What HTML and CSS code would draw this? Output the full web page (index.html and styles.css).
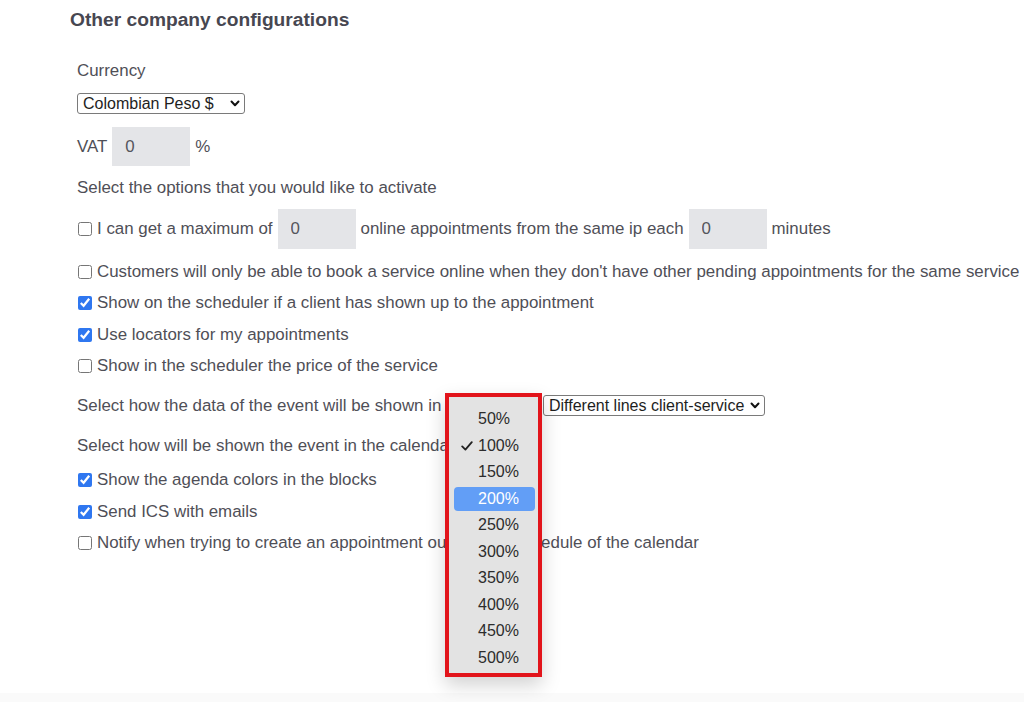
FILE: index.html
```html
<!DOCTYPE html>
<html lang="en">
<head>
    <meta charset="UTF-8">
    <meta name="viewport" content="width=device-width, initial-scale=1.0">
    <title>Other company configurations</title>
    <link rel="stylesheet" href="styles.css">
</head>
<body>
    <div class="page">
        <h2 class="title">Other company configurations</h2>

        <div class="form">
            <div class="row text-row">Currency</div>
            <div class="row sel-row">
                <span class="select-wrap">
                    <select class="sel sel-currency"><option>Colombian Peso $</option></select>
                    <svg class="chev" width="10" height="7" viewBox="0 0 10 7"><path d="M1.5 1.5 L5 5.2 L8.5 1.5" fill="none" stroke="#111" stroke-width="2" stroke-linecap="round" stroke-linejoin="round"/></svg>
                </span>
            </div>
            <div class="row vat-row">
                <span>VAT</span>
                <input class="num" type="text" value="0">
                <span>%</span>
            </div>
            <div class="row text-row options">Select the options that you would like to activate</div>

            <!-- opciones -->
            <label class="row check input-row">
                <input type="checkbox">
                <span>I can get a maximum of</span>
                <input class="num" type="text" value="0">
                <span>online appointments from the same ip each</span>
                <input class="num" type="text" value="0">
                <span>minutes</span>
            </label>
            <label class="row check first"><input type="checkbox"><span>Customers will only be able to book a service online when they don't have other pending appointments for the same service</span></label>
            <label class="row check"><input type="checkbox" checked><span>Show on the scheduler if a client has shown up to the appointment</span></label>
            <label class="row check"><input type="checkbox" checked><span>Use locators for my appointments</span></label>
            <label class="row check"><input type="checkbox"><span>Show in the scheduler the price of the service</span></label>

            <div class="row sel-line">
                <span class="sel-label">Select how the data of the event will be shown in the calendar</span>
                <span class="select-wrap">
                    <select class="sel sel-lines"><option>Different lines client-service</option></select>
                    <svg class="chev" width="10" height="7" viewBox="0 0 10 7"><path d="M1.5 1.5 L5 5.2 L8.5 1.5" fill="none" stroke="#111" stroke-width="2" stroke-linecap="round" stroke-linejoin="round"/></svg>
                </span>
            </div>
            <div class="row sel-line second">
                <span class="sel-label">Select how will be shown the event in the calendar</span>
                <span class="select-wrap">
                    <select class="sel sel-zoom"><option>100%</option></select>
                </span>
            </div>

            <label class="row check after-sel"><input type="checkbox" checked><span>Show the agenda colors in the blocks</span></label>
            <label class="row check"><input type="checkbox" checked><span>Send ICS with emails</span></label>
            <label class="row check"><input type="checkbox"><span>Notify when trying to create an appointment outside the schedule of the calendar</span></label>
        </div>

        <!-- menu abierto del select -->
        <ul class="zoom-menu">
            <li>50%</li>
            <li><svg class="tick" width="12" height="10" viewBox="0 0 12 10"><path d="M1.2 5.4 L4.4 8.6 L10.8 1.2" fill="none" stroke="#222" stroke-width="1.8" stroke-linecap="round" stroke-linejoin="round"/></svg>100%</li>
            <li>150%</li>
            <li class="active">200%</li>
            <li>250%</li>
            <li>300%</li>
            <li>350%</li>
            <li>400%</li>
            <li>450%</li>
            <li>500%</li>
        </ul>
    </div>
    <div class="bottom-bar"></div>
</body>
</html>
```

FILE: styles.css
```css
body {
    margin: 0;
    padding: 0;
    background: #fff;
    font-family: "Liberation Sans", Arial, sans-serif;
    color: #4f4f57;
    overflow: hidden;
}

.page {
    position: relative;
    height: 693px;
    padding: 9px 0 0 70px;
    box-sizing: border-box;
}

.title {
    margin: 0;
    height: 22px;
    line-height: 22px;
    font-size: 19.2px;
    font-weight: bold;
    color: #474751;
}

.form {
    padding-left: 7px;
    display: flex;
    flex-direction: column;
    align-items: flex-start;
}

.row {
    display: flex;
    align-items: center;
    font-size: 16.9px;
    white-space: nowrap;
}

.text-row {
    height: 20px;
    margin-top: 29.5px;
}

.text-row.options {
    margin-top: 12px;
}

.sel-row {
    height: 21px;
    margin-top: 12.5px;
}

.vat-row {
    height: 39px;
    margin-top: 13px;
    gap: 5px;
}

.num {
    width: 78px;
    height: 39px;
    box-sizing: border-box;
    border: none;
    background: #e4e5e8;
    padding: 0 0 0 13px;
    font-family: inherit;
    font-size: 16.9px;
    color: #55555c;
    outline: none;
}

/* selects */
.select-wrap {
    position: relative;
    display: inline-flex;
}

.sel {
    appearance: none;
    -webkit-appearance: none;
    height: 21px;
    box-sizing: border-box;
    border: 1px solid #7a7a7a;
    border-radius: 3px;
    background: #fff;
    padding: 0 0 0 5px;
    font-family: inherit;
    font-size: 16px;
    color: #1e1e1e;
    line-height: 19px;
}

.sel-currency { width: 168px; }
.sel-lines { width: 222px; }
.sel-zoom { width: 70px; }

.chev {
    position: absolute;
    right: 5px;
    top: 7px;
    pointer-events: none;
}

.sel-line {
    height: 21px;
    margin-top: 19px;
}

.sel-line .sel-label {
    margin-right: 4px;
}

.sel-line.second {
    margin-top: 19.5px;
}

/* checkboxes */
.check {
    height: 20px;
    margin-top: 11.5px;
    color: #4f4f57;
}

.check input[type="checkbox"] {
    width: 14px;
    height: 14px;
    margin: 0 5px 0 1px;
    accent-color: #2f77f0;
}

.check.input-row {
    height: 40px;
    margin-top: 11px;
}

.input-row .num {
    height: 40px;
    margin: 0 5px;
}

.check.first {
    margin-top: 12.5px;
}

.check.after-sel {
    margin-top: 13.5px;
}

/* menu de zoom */
.zoom-menu {
    position: absolute;
    left: 445px;
    top: 393px;
    width: 97px;
    height: 284px;
    box-sizing: border-box;
    margin: 0;
    padding: 9px 0 0;
    list-style: none;
    background: #e3e3e3;
    border: 4px solid #e2141b;
    box-shadow: 0 8px 18px rgba(0,0,0,0.18);
}

.zoom-menu li {
    position: relative;
    height: 26.5px;
    line-height: 26.5px;
    padding-left: 29px;
    font-size: 16px;
    color: #2c2c2c;
}

.zoom-menu .tick {
    position: absolute;
    left: 12px;
    top: 8px;
}

.zoom-menu li.active {
    height: 24px;
    line-height: 24px;
    margin: 1.25px 3px 1.25px 5px;
    padding-left: 24px;
    background: #629ef6;
    border-radius: 4px;
    color: #fff;
}

.bottom-bar {
    height: 9px;
    background: #fafafa;
}
```
